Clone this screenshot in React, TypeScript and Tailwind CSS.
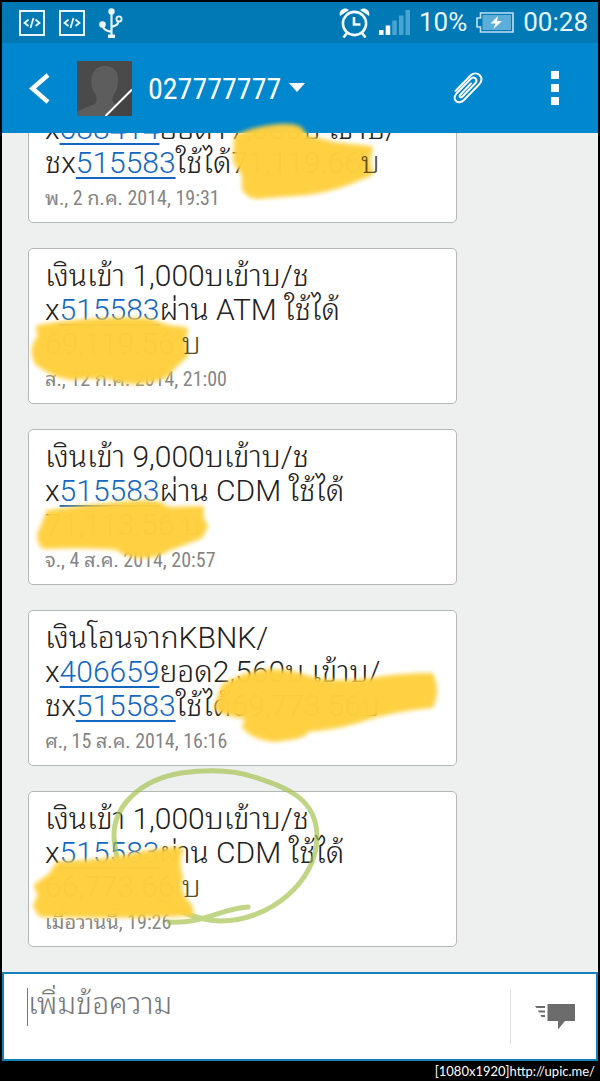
import { useState, type ReactNode } from 'react'

type Message = { id: number; body: ReactNode; date: string; marker: string }

function Num({ children }: { children: string }) {
  return (
    <a href={`tel:${children}`} className="text-[#1467c0] underline decoration-2 underline-offset-4">
      {children}
    </a>
  )
}

function Baht({ children }: { children: string }) {
  return <span className="relative z-30 text-[#5c4f1c]">{children}</span>
}

const messages: Message[] = [
  {
    id: 1,
    body: (
      <>
        x<Num>688414</Num>ยอด17,000บ เข้าบ/
        <br />ชx<Num>515583</Num>ใช้ได้71,119.66<Baht>บ</Baht>
      </>
    ),
    date: 'พ., 2 ก.ค. 2014, 19:31',
    marker:
      'M208 36Q225 27 250 25Q262 24 270 27L277 36L305 43L341 47Q336 58 341 71L319 80Q300 87 279 90L228 94Q214 92 216 80Q218 72 207 60Z',
  },
  {
    id: 2,
    body: (
      <>
        เงินเข้า 1,000บเข้าบ/ช
        <br />x<Num>515583</Num>ผ่าน ATM ใช้ได้
        <br />
        69,119.56 <Baht>บ</Baht>
      </>
    ),
    date: 'ส., 12 ก.ค. 2014, 21:00',
    marker:
      'M10 79Q35 74 75 72Q105 70 122 73L139 79L156 81Q152 92 156 106L142 119Q138 130 110 132Q95 133 79 127Q60 126 42 128Q24 126 8 113Q2 98 12 88Z',
  },
  {
    id: 3,
    body: (
      <>
        เงินเข้า 9,000บเข้าบ/ช
        <br />x<Num>515583</Num>ผ่าน CDM ใช้ได้
        <br />
        71,113.56 บ
      </>
    ),
    date: 'จ., 4 ส.ค. 2014, 20:57',
    marker:
      'M20 83Q60 77 99 74Q120 72 131 75L139 80L172 79Q170 88 176 96L171 106L139 118Q125 127 108 125Q94 123 89 117Q60 114 15 116Q8 108 14 98Z',
  },
  {
    id: 4,
    body: (
      <>
        เงินโอนจากKBNK/
        <br />x<Num>406659</Num>ยอด2,560บ เข้าบ/
        <br />ชx<Num>515583</Num>ใช้ได้69,773.56บ
      </>
    ),
    date: 'ศ., 15 ส.ค. 2014, 16:16',
    marker:
      'M195 76Q212 64 239 61Q262 61 280 68Q305 75 342 70Q370 65 402 65Q408 80 402 94Q360 98 332 108Q305 116 276 118Q280 125 245 128Q225 126 216 115Q222 108 216 105Q196 102 188 97Z',
  },
  {
    id: 5,
    body: (
      <>
        เงินเข้า 1,000บเข้าบ/ช
        <br />x<Num>515583</Num>ผ่าน CDM ใช้ได้
        <br />
        66,773.66 <Baht>บ</Baht>
      </>
    ),
    date: 'เมื่อวานนี้, 19:26',
    marker: 'M30 72Q70 71 95 66Q130 58 151 58Q146 71 151 85Q146 101 160 114L162 121Q100 124 12 122L7 114L12 103L8 94L22 84Z',
  },
]

function CodeIcon() {
  return (
    <svg width="26" height="26" viewBox="0 0 26 26" fill="none" stroke="#e8f6ff" strokeWidth="2">
      <rect x="1" y="1" width="24" height="24" />
      <path d="M9.5 9.5L5.5 13L9.5 16M16.5 9.5L20.5 13L16.5 16M14.5 8L11.5 18" strokeWidth="1.8" />
    </svg>
  )
}

function UsbIcon() {
  return (
    <svg width="24" height="30" viewBox="0 0 24 30" fill="none" stroke="#e8f6ff" strokeWidth="2.2">
      <circle cx="12.5" cy="3.5" r="3.2" fill="#e8f6ff" stroke="none" />
      <path d="M12.5 4V28M3.5 16C3.5 22 9 23 12.5 24M19 12.5C20 17 16 18 12.5 19" />
      <circle cx="3.5" cy="16.5" r="3.3" fill="#e8f6ff" stroke="none" />
      <circle cx="20" cy="11" r="2.6" strokeWidth="1.8" />
      <rect x="9" y="26.5" width="7" height="3.5" fill="#e8f6ff" stroke="none" />
    </svg>
  )
}

function AlarmIcon() {
  return (
    <svg width="31" height="30" viewBox="0 0 31 30" fill="none" stroke="#f2faff" strokeWidth="2.6">
      <circle cx="15.5" cy="15.5" r="11.6" />
      <path d="M15 9V16.5H21.5M8 25L4.5 29.5M23 25L26.5 29.5" />
      <path d="M1 8C-1 2 6 -2 10 2ZM30 8C32 2 25 -2 21 2Z" fill="#f2faff" stroke="none" />
    </svg>
  )
}

function SignalIcon() {
  return (
    <svg width="31" height="25" viewBox="0 0 31 25" fill="#4ba3d1">
      <path d="M0 20h4.5v5H0zM6.7 15.5h4.5V25H6.7z" fill="#fff" />
      <path d="M13.3 10.5h4.5V25h-4.5zM20 5.5h4.5V25H20zM26.5 0H31v25h-4.5z" />
    </svg>
  )
}

function BatteryIcon() {
  return (
    <svg width="38" height="21" viewBox="0 0 38 21">
      <path d="M4.5 1H37V20H4.5V15H1V6H4.5Z" fill="none" stroke="#bfe0f2" strokeWidth="1.6" />
      <rect x="6.5" y="3" width="28.5" height="15" fill="#5caed9" />
      <path d="M22 4L14.5 11.5H19.5L17.5 17L26 9H21Z" fill="#fff" />
    </svg>
  )
}

function Avatar() {
  return (
    <svg width="55" height="55" viewBox="0 0 55 55" className="shrink-0">
      <rect width="55" height="55" fill="#4a4a4a" />
      <path
        d="M0 55V51C6 47 14 45 18 43C20 40 20 37 19 34C15 29 14 24 14.5 18C15 9 21 5 28 5C36 5 41 10 41 18C41 25 40 30 36 35C35 39 35 41 38 43L43 46L34 55Z"
        fill="#5d5d5d"
      />
      <path d="M55 29V55H29Z" fill="#444" />
      <path d="M28.500 55L55 28.500" stroke="#fff" strokeWidth="2" />
    </svg>
  )
}

function PaperclipIcon() {
  return (
    <svg width="30" height="32" viewBox="0 0 30 32" fill="none" stroke="#fff" strokeWidth="1.9" strokeLinecap="round">
      <path d="M2.500 19L17.500 3.500C20.500 0.500 24.500 1 26.500 3C29 5.500 29 9 26.500 12L11 28C8.500 30.500 5 31 3 29C1 27 1.500 24 3.500 21.500L17.500 7C19.500 5 21.500 5.500 22.500 6.500C23.500 7.500 24 9.500 22 11.500L9.500 24.500C8.500 25.500 7.500 25.500 7 25C6.500 24.500 6.500 23.500 7.500 22.500L18 11.500" />
    </svg>
  )
}

function SendIcon() {
  return (
    <svg width="40" height="26" viewBox="0 0 40 26" fill="#6c6c6c">
      <path d="M12.500 0H40V17H30L23 25.500V17H12.500Z" />
      <path d="M0 2H10V4H1.500ZM3 6.500H10V8.500H4ZM5.500 11H10V13H6.500Z" />
    </svg>
  )
}

function Card({ message, circled }: { message: Message; circled: boolean }) {
  return (
    <article className="relative w-full max-w-[429px] shrink-0 rounded-[5px] border border-[#b4b7b8] bg-white px-4 pb-3 pt-[10px]">
      <p className="whitespace-nowrap text-[30px] font-light leading-[34px] text-[#222]">{message.body}</p>
      <time className="mt-[6px] block font-['Roboto_Condensed','Noto_Sans_Thai_Looped','Loma','Garuda','Waree',sans-serif] text-[20px] leading-6 text-[#858585]">
        {message.date}
      </time>
      <svg className="pointer-events-none absolute inset-0 z-20 h-full w-full overflow-visible" fill="none">
        {circled && (
          <path
            d="M140 130C175 132 190 117 219 115M130 108C155 122 170 128 192 129C240 129 288 90 288 45C288 5 255 -5 225 -15C205 -22 180 -23 152 -19C110 -12 85 15 85 43C85 53 87 60 90 75"
            stroke="#9fbf45"
            strokeWidth="5"
            strokeLinecap="round"
            opacity="0.65"
          />
        )}
        <path
          d={message.marker}
          className="blur-[2px]"
          fill="#ffd03f"
          stroke="#ffd03f"
          strokeWidth="6"
          strokeLinejoin="round"
          opacity="0.98"
        />
      </svg>
    </article>
  )
}

export default function App() {
  const [text, setText] = useState('')

  return (
    <div className="flex h-screen flex-col overflow-hidden bg-black px-[2px] pt-[2px] font-['Roboto','Noto_Sans_Thai_Looped','Loma','Garuda','Waree',sans-serif]">
      <div className="relative z-10 flex h-[41px] shrink-0 items-center justify-between bg-[#0079b5] pl-[17px] pr-[10px] text-[26px] leading-[41px] text-[#e8f6ff]">
        <div className="flex items-center gap-[14px]">
          <CodeIcon />
          <CodeIcon />
          <UsbIcon />
        </div>
        <div className="flex items-center gap-[9px]">
          <AlarmIcon />
          <SignalIcon />
          <span>10%</span>
          <BatteryIcon />
          <span>00:28</span>
        </div>
      </div>

      <header className="relative z-10 flex h-[90px] shrink-0 items-center bg-[#0087cd] pl-[27px] pr-[39px]">
        <button aria-label="Back" className="mr-[27px]">
          <svg width="21" height="31" viewBox="0 0 21 31" fill="none" stroke="#fff" strokeWidth="4.500">
            <path d="M19 2L3.500 15.500L19 29" />
          </svg>
        </button>
        <Avatar />
        <button className="ml-4 flex items-center gap-2 font-['Roboto_Condensed','Roboto',sans-serif] text-[30px] text-white">
          027777777
          <svg width="16" height="10" viewBox="0 0 16 10" fill="#fff">
            <path d="M0 0H16L8 9Z" />
          </svg>
        </button>
        <button aria-label="Attach" className="ml-auto mr-[68px]">
          <PaperclipIcon />
        </button>
        <button aria-label="Menu" className="flex flex-col gap-[5px]">
          <span className="size-2 bg-white" />
          <span className="size-2 bg-white" />
          <span className="size-2 bg-white" />
        </button>
      </header>

      <main className="flex min-h-0 flex-1 flex-col justify-end gap-[25px] bg-[#eef0f0] px-[26px] pb-[25px]">
        {messages.map((m) => (
          <Card key={m.id} message={m} circled={m.id === 5} />
        ))}
      </main>

      <form
        className="flex h-[89px] shrink-0 items-center border-2 border-[#1480b8] bg-white pl-[23px] pr-[21px]"
        onSubmit={(e) => e.preventDefault()}
      >
        <span className="mb-5 h-[38px] w-px bg-[#777]" />
        <textarea
          aria-label="เพิ่มข้อความ"
          placeholder="เพิ่มข้อความ"
          value={text}
          onChange={(e) => setText(e.target.value)}
          className="h-[64px] min-w-0 flex-1 resize-none text-[30px] font-light leading-[38px] text-[#222] outline-none placeholder:text-[#777]"
        />
        <div className="mr-6 h-[54px] w-px bg-[#ddd]" />
        <button aria-label="Send">
          <SendIcon />
        </button>
      </form>

      <footer className="h-5 shrink-0 pr-[3px] text-right font-['Lato',sans-serif] text-[13px] leading-5 text-white">
        [1080x1920]http://upic.me/
      </footer>
    </div>
  )
}
